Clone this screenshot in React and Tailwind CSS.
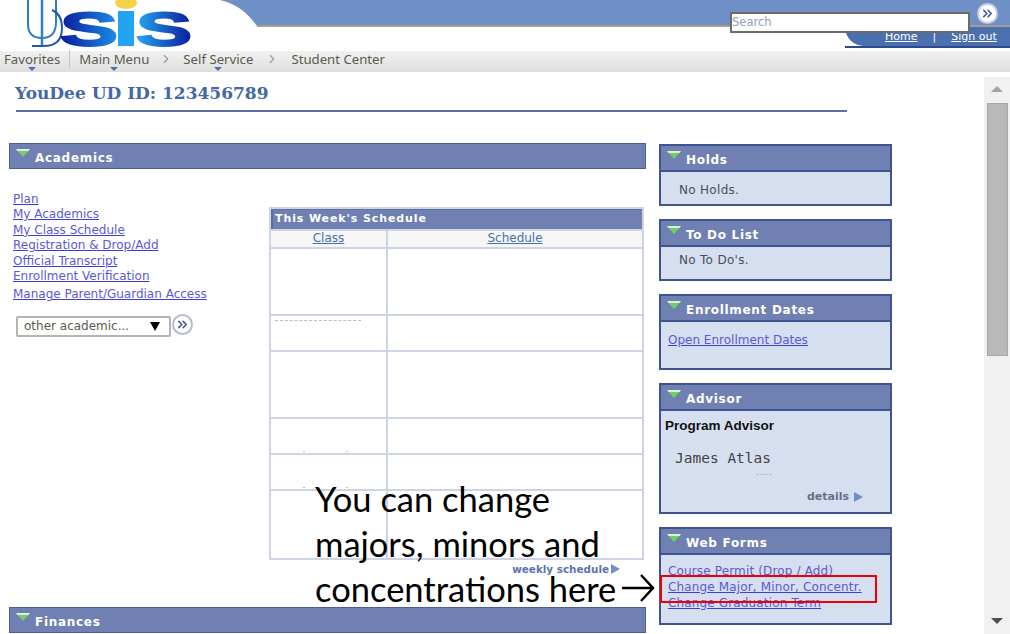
import { ChevronRight, ChevronsRight } from "lucide-react";

const LINK = "text-[#5a5ad6] underline decoration-[#3c3ce0]";

function GreenArrow() {
  return (
    <svg width="14" height="8" viewBox="0 0 14 8" className="shrink-0">
      <path d="M0 0 H14 L7 8 Z" fill="#6fd06a" />
      <path d="M0 0 H14 L12.5 2 H1.5 Z" fill="#d8f2d0" />
    </svg>
  );
}

function GoButton({ className }) {
  return (
    <div className={`flex h-[21px] w-[21px] items-center justify-center rounded-full border-2 border-[#b4bcd0] bg-white ${className}`}>
      <ChevronsRight size={15} strokeWidth={2.5} className="text-[#3f5a9c]" />
    </div>
  );
}

function PanelHead({ title }) {
  return (
    <div className="flex h-[24px] items-start gap-[5px] bg-[#7180b3] pl-[6px] pt-[5px]">
      <GreenArrow />
      <span className="mt-[1px] text-[12px] leading-[16px] font-bold tracking-[0.7px] text-white">{title}</span>
    </div>
  );
}

function SidePanel({ title, h, children }) {
  return (
    <div className={`mb-[13px] flex flex-col border-2 border-[#3f5490] bg-[#d6dfef] ${h}`}>
      <PanelHead title={title} />
      <div className="flex-1 border-t-2 border-[#3f5490] text-[12px] text-[#4c4c5c]">{children}</div>
    </div>
  );
}

function Specks({ className }) {
  return <div className={`border-t border-dashed border-[#c9bcac] ${className}`} />;
}

function Logo() {
  return (
    <svg width="220" height="51" viewBox="0 0 220 51" className="shrink-0">
      <defs>
        <linearGradient id="s1" x1="0" x2="1">
          <stop offset="0" stopColor="#0a1a9c" />
          <stop offset="1" stopColor="#1a8fe8" />
        </linearGradient>
        <linearGradient id="s2" x1="0" x2="1">
          <stop offset="0" stopColor="#25a8f0" />
          <stop offset="1" stopColor="#0a1a9c" />
        </linearGradient>
      </defs>
      <path d="M28 0 V24 Q28 38 42 38 Q56 38 56 22 V0" fill="none" stroke="#2f7fc0" strokeWidth="2" />
      <path d="M42 0 V46" stroke="#2f7fc0" strokeWidth="2.5" />
      <path d="M32 46 H44 Q62 46 62 28 Q62 14 52 10" fill="none" stroke="#1c5fa8" strokeWidth="2" />
      <ellipse cx="126" cy="3" rx="11" ry="6" fill="#f4d24a" />
      <text x="60" y="46" fontFamily="Liberation Sans" fontWeight="700" fontSize="49" fill="url(#s1)" stroke="url(#s1)" strokeWidth="2" textLength="58" lengthAdjust="spacingAndGlyphs">S</text>
      <rect x="118" y="11" width="16" height="35" fill="#22a4f2" />
      <text x="136" y="46" fontFamily="Liberation Sans" fontWeight="700" fontSize="49" fill="url(#s2)" stroke="url(#s2)" strokeWidth="2" textLength="56" lengthAdjust="spacingAndGlyphs">S</text>
    </svg>
  );
}

function NavItem({ label, arrow }) {
  return (
    <span className="relative whitespace-nowrap">
      {label}
      {arrow && <span className="absolute -bottom-[4px] left-1/2 h-0 w-0 -translate-x-1/2 border-x-[4px] border-t-[4px] border-x-transparent border-t-[#4a6fb0]" />}
    </span>
  );
}

function Schedule() {
  const rows = [
    { h: "h-[67px]" },
    { h: "h-[36px]", speck: "mt-[4px] ml-[4px] w-[86px]" },
    { h: "h-[67px]" },
    { h: "h-[36px]", dots: true },
    { h: "h-[36px]", dots: true },
    { h: "h-[67px]" },
  ];
  return (
    <div className="mt-[11px] ml-[260px] w-[375px] border-2 border-[#ccd4e6]">
      <div className="h-[20px] border-t border-l-2 border-[#5f6f9f] bg-[#7180b3] pl-[2px] text-[11px] leading-[18px] font-bold tracking-[0.9px] text-white">
        This Week's Schedule
      </div>
      <div className="flex h-[20px] border-y-2 border-[#ccd4e6] bg-[#f6f6f6] text-center text-[12px] leading-[14px] text-[#4a6fa8] underline">
        <div className="w-[117px] border-r-2 border-[#ccd4e6]">Class</div>
        <div className="flex-1">Schedule</div>
      </div>
      {rows.map((r, i) => (
        <div key={i} className={`flex border-b-2 border-[#ccd4e6] last:border-b-0 ${r.h}`}>
          <div className="w-[117px] border-r-2 border-[#ccd4e6]">
            {r.speck && <Specks className={r.speck} />}
            {r.dots && (
              <div className="mt-[32px] ml-[32px] flex gap-[41px]">
                <Specks className="w-[2px]" />
                <Specks className="w-[2px]" />
              </div>
            )}
          </div>
          <div className="flex-1" />
        </div>
      ))}
    </div>
  );
}

export default function App() {
  return (
    <div className="relative flex h-[634px] w-[1010px] flex-col overflow-hidden bg-white font-['DejaVu_Sans',sans-serif]">
      {/* top banner */}
      <header className="flex h-[51px]">
        <Logo />
        <div className="flex flex-1 flex-col">
          <div className="flex">
            <svg width="37" height="27" viewBox="0 0 37 27" className="shrink-0">
              <path d="M0 0 C18 4 28 14 37 26 V0 Z" fill="#6f90c6" />
            </svg>
            <div className="flex h-[27px] flex-1 items-start border-b-2 border-[#a39d92] bg-[#6f90c6] pt-[12px] pl-[473px]">
              <div className="relative z-10 h-[21px] w-[240px] shrink-0 border-2 border-[#6b6b6b] bg-white text-[11.5px] leading-[17px] text-[#8fa0b8]">
                Search
              </div>
              <GoButton className="relative z-10 mt-[-9px] ml-[7px] shrink-0 border-[#c9cfdd]" />
            </div>
          </div>
          <div className="ml-auto h-[21px] w-[165px] border-b-2 border-[#2f4a8c]">
            <div className="flex h-full items-start gap-[15px] rounded-bl-[30px] bg-[#4a70b0] pt-[1px] pl-[40px] text-[11px] leading-[17px] text-white">
              <span className="underline">Home</span>
              <span>|</span>
              <span className="underline">Sign out</span>
            </div>
          </div>
        </div>
      </header>

      {/* breadcrumb bar */}
      <nav className="flex h-[21px] items-center bg-gradient-to-b from-[#f1f1f1] to-[#dedede] pb-[5px] pl-[4px] font-['Noto_Sans',sans-serif] text-[13.2px] leading-[16px] text-[#5c5a4c]">
        <NavItem label="Favorites" arrow />
        <span className="mx-[9px] h-[18px] border-l border-[#c4c4c4]" />
        <NavItem label="Main Menu" arrow />
        <ChevronRight size={14} className="mx-[10px] text-[#9a9a9a]" />
        <NavItem label="Self Service" arrow />
        <ChevronRight size={14} className="mx-[12px] text-[#9a9a9a]" />
        <NavItem label="Student Center" />
      </nav>

      <div className="flex min-h-0 flex-1">
        <main className="w-[984px] shrink-0">
          <h1 className="mt-[11px] ml-[15px] font-['DejaVu_Serif',serif] text-[17px] leading-[21px] font-bold text-[#4468a5]">
            YouDee UD ID: 123456789
          </h1>
          <div className="mt-[6px] ml-[16px] w-[831px] border-t-2 border-[#5b6ea6]" />

          <div className="mt-[31px] ml-[9px] flex gap-[13px]">
            <div className="w-[637px]">
              <div className="border border-[#4a5e98]">
                <PanelHead title="Academics" />
              </div>
              <div className="relative">
                <div className="absolute top-[23px] left-[4px] flex flex-col text-[12px] leading-[15.4px]">
                  <a className={LINK}>Plan</a>
                  <a className={LINK}>My Academics</a>
                  <a className={LINK}>My Class Schedule</a>
                  <a className={LINK}>Registration &amp; Drop/Add</a>
                  <a className={LINK}>Official Transcript</a>
                  <a className={LINK}>Enrollment Verification</a>
                  <a className={`${LINK} mt-[3px]`}>Manage Parent/Guardian Access</a>
                  <div className="mt-[11px] ml-[3px] flex items-start">
                    <div className="mt-[2px] flex h-[21px] w-[155px] items-center justify-between rounded-[2px] border-2 border-[#b4b4b4] bg-white pr-[9px] pl-[6px] text-[12px] text-[#5c5a4c]">
                      <span>other academic...</span>
                      <span className="h-0 w-0 border-x-[5px] border-t-[9px] border-x-transparent border-t-black" />
                    </div>
                    <GoButton className="ml-[1px]" />
                  </div>
                </div>
              </div>
              <div className="pt-[27px]">
                <Schedule />
              </div>
              <div className="mt-[2px] mr-[26px] flex items-center justify-end gap-[2px] text-[10.4px] leading-[14px] font-bold text-[#5b74ac]">
                weekly schedule
                <span className="h-0 w-0 border-y-[5px] border-l-[9px] border-y-transparent border-l-[#6f90c6]" />
              </div>
              <div className="mt-[31px] border border-[#4a5e98]">
                <PanelHead title="Finances" />
              </div>
            </div>

            <aside className="mt-[1px] w-[233px]">
              <SidePanel title="Holds" h="h-[62px]">
                <p className="pt-[9px] pl-[18px] tracking-[0.3px]">No Holds.</p>
              </SidePanel>
              <SidePanel title="To Do List" h="h-[62px]">
                <p className="pt-[4px] pl-[18px] tracking-[0.3px]">No To Do's.</p>
              </SidePanel>
              <SidePanel title="Enrollment Dates" h="h-[76px]">
                <p className="pt-[9px] pl-[7px]"><a className={LINK}>Open Enrollment Dates</a></p>
              </SidePanel>
              <SidePanel title="Advisor" h="h-[131px]">
                <p className="pt-[5px] pl-[4px] font-['Liberation_Sans',sans-serif] text-[13.5px] font-bold text-[#111]">Program Advisor</p>
                <p className="mt-[13px] pl-[14px] font-['DejaVu_Sans_Mono',monospace] text-[14.5px] leading-[18px] text-[#444]">James Atlas</p>
                <Specks className="mt-[7px] ml-[95px] w-[16px]" />
                <div className="mt-[15px] mr-[27px] flex items-center justify-end gap-[5px] text-[11px] leading-[14px] font-bold text-[#66708a]">
                  details
                  <span className="h-0 w-0 border-y-[5px] border-l-[9px] border-y-transparent border-l-[#6f90c6]" />
                </div>
              </SidePanel>
              <SidePanel title="Web Forms" h="h-[98px]">
                <div className="flex flex-col pt-[8px] pl-[7px] leading-[16px] tracking-[0.15px]">
                  <a className={LINK}>Course Permit (Drop / Add)</a>
                  <a className={LINK}>Change Major, Minor, Concentr.</a>
                  <a className={LINK}>Change Graduation Term</a>
                </div>
              </SidePanel>
            </aside>
          </div>
        </main>

        {/* scrollbar */}
        <div className="mt-[5px] flex w-[26px] flex-col items-center bg-[#f1f1f1]">
          <span className="mt-[9px] h-0 w-0 border-x-[6px] border-b-[6px] border-x-transparent border-b-[#a3a3a3]" />
          <div className="mt-[11px] h-[253px] w-[21px] border border-[#a8a8a8] bg-[#b9b9b9]" />
          <span className="mt-auto mb-[10px] h-0 w-0 border-x-[6px] border-t-[6px] border-x-transparent border-t-[#505050]" />
        </div>
      </div>

      {/* slide annotation over the page */}
      <p className="absolute top-[476px] left-[315px] font-['Lato',sans-serif] text-[34.5px] leading-[45px] whitespace-nowrap text-black">
        You can change
        <br />
        majors, minors and
        <br />
        concentrations here
      </p>
      <svg width="34" height="30" viewBox="0 0 34 30" className="absolute top-[573px] left-[621px]">
        <path d="M1 15 H31 M20 2 L32 15 L20 28" fill="none" stroke="black" strokeWidth="2.5" />
      </svg>
      <div className="absolute top-[575px] left-[660px] h-[28px] w-[217px] border-2 border-[#f00000]" />
    </div>
  );
}
